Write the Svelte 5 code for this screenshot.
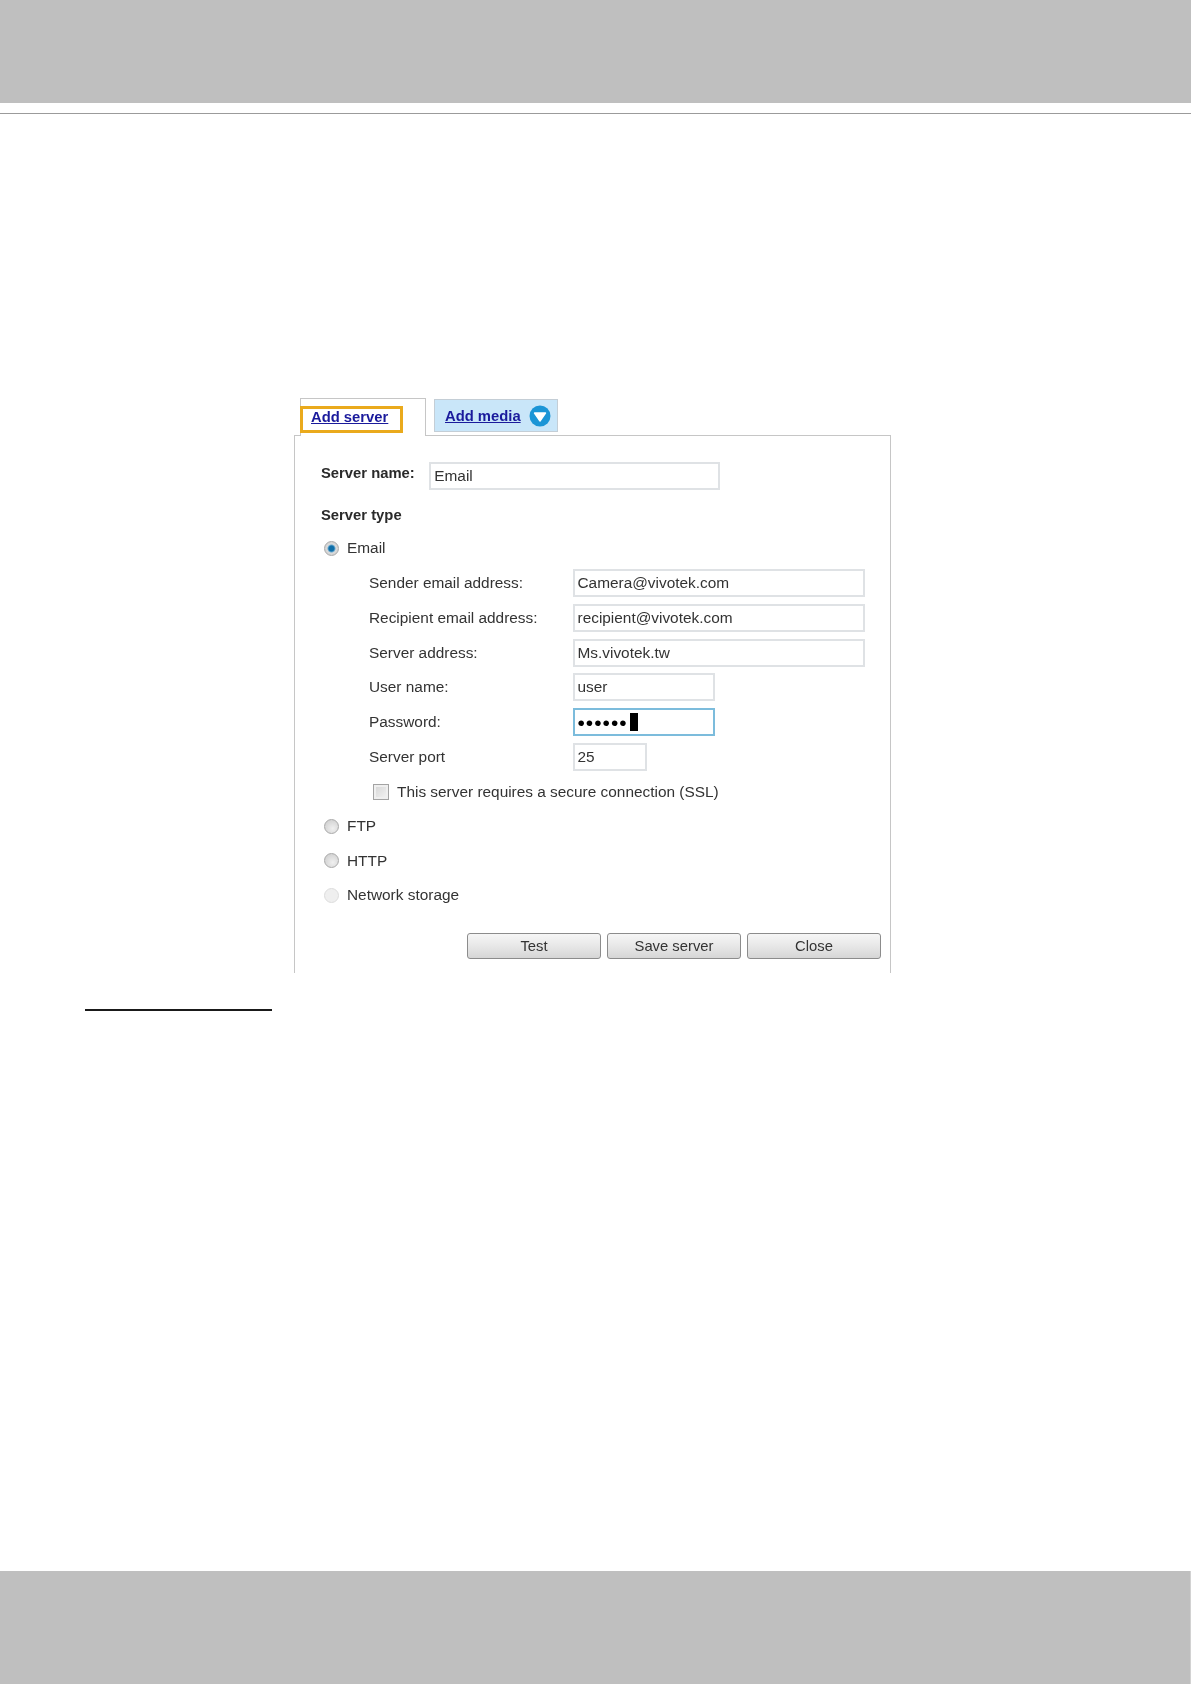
<script>
  const fields = [
    { label: 'Sender email address:', value: 'Camera@vivotek.com', size: 'long' },
    { label: 'Recipient email address:', value: 'recipient@vivotek.com', size: 'long' },
    { label: 'Server address:', value: 'Ms.vivotek.tw', size: 'long' },
    { label: 'User name:', value: 'user', size: 'mid' }
  ]
</script>

<div class="page">
  <div class="top"></div>
  <div class="rule"></div>

  <div class="shot">
    <div class="tabs">
      <div class="tab active"><a href="#server" class="hl">Add server</a></div>
      <div class="tab media">
        <a href="#media">Add media</a>
        <svg width="22" height="22" viewBox="0 0 22 22">
          <circle cx="11" cy="11" r="10.5" fill="#1b95d6" />
          <path d="M5.5 8 H16.5 L11 16 Z" fill="#fff" stroke="#fff" stroke-width="1.4" stroke-linejoin="round" />
        </svg>
      </div>
    </div>

    <div class="panel">
      <div class="name-row">
        <b>Server name:</b>
        <input class="field name" readonly value="Email" />
      </div>
      <div class="type-title"><b>Server type</b></div>

      <div class="radio-row first"><span class="radio on"></span>Email</div>

      <div class="form">
        {#each fields as f}
          <div class="row">
            <span class="lbl">{f.label}</span>
            <input class="field {f.size}" readonly value={f.value} />
          </div>
        {/each}
        <div class="row">
          <span class="lbl">Password:</span>
          <div class="field mid focus"><span class="dots">••••••</span><span class="caret"></span></div>
        </div>
        <div class="row">
          <span class="lbl">Server port</span>
          <input class="field port" readonly value="25" />
        </div>
        <div class="check-row"><span class="check"></span>This server requires a secure connection (SSL)</div>
      </div>

      <div class="radio-row"><span class="radio"></span>FTP</div>
      <div class="radio-row"><span class="radio"></span>HTTP</div>
      <div class="radio-row"><span class="radio off"></span>Network storage</div>

      <div class="buttons">
        <button>Test</button>
        <button>Save server</button>
        <button>Close</button>
      </div>
    </div>
  </div>

  <div class="footnote"></div>
  <div class="bottom"></div>
</div>

<style>
  :global(body) {
    margin: 0;
    background: #fff;
  }

  .page {
    display: flex;
    flex-direction: column;
    height: 1684px;
    font-family: "Liberation Sans", Arial, sans-serif;
    font-size: 15.4px;
    color: #333;
  }

  .top {
    height: 103px;
    background: #bfbfbf;
  }

  .rule {
    height: 1px;
    margin-top: 10px;
    background: #9b9b9b;
  }

  .shot {
    width: 597px;
    margin: 284px 0 0 294px;
    filter: blur(0.35px);
  }

  .tabs {
    display: flex;
    align-items: flex-start;
    height: 37px;
    padding-left: 6px;
    position: relative;
    z-index: 1;
  }

  .tab {
    box-sizing: border-box;
    font-size: 14.8px;
    font-weight: bold;
  }

  .tab a {
    color: #1a1a9c;
  }

  .active {
    width: 126px;
    height: 38px;
    padding-top: 7px;
    background: #fff;
    border: solid #c6c6c6;
    border-width: 1px 1px 0 1px;
  }

  .hl {
    display: block;
    box-sizing: border-box;
    width: 103px;
    height: 27px;
    margin-left: -1px;
    padding: 0 0 0 8px;
    border: 3px solid #eaaa1c;
  }

  .media {
    display: flex;
    align-items: center;
    gap: 8px;
    width: 124px;
    height: 33px;
    margin: 1px 0 0 8px;
    padding-left: 10px;
    background: #c9e6f9;
    border: 1px solid #c4ced6;
  }

  .panel {
    box-sizing: border-box;
    height: 538px;
    padding: 25.5px 0 0 26px;
    border: solid #c6c6c6;
    border-width: 1px 1px 0 1px;
  }

  .name-row {
    display: flex;
    align-items: flex-start;
    gap: 14.5px;
    color: #2a2a2a;
    line-height: 22px;
  }

  .name-row b,
  .type-title b {
    font-size: 14.8px;
  }

  .field {
    box-sizing: border-box;
    height: 28px;
    margin: 0;
    padding: 0 3px;
    border: 2px solid #dfe2e5;
    background: #fff;
    font: inherit;
    color: #333;
    outline: none;
  }

  .name {
    width: 291px;
  }

  .type-title {
    margin-top: 13.5px;
    line-height: 24px;
    color: #2a2a2a;
  }

  .radio-row {
    display: flex;
    align-items: center;
    gap: 8px;
    height: 20px;
    margin: 14.6px 0 0 3px;
  }

  .radio-row.first {
    margin-top: 11.2px;
  }

  .radio {
    box-sizing: border-box;
    width: 15px;
    height: 15px;
    border-radius: 50%;
    border: 1px solid #a9a9a9;
    background: radial-gradient(circle at 60% 65%, #f0f0f0, #c9c9c9);
  }

  .radio.on {
    background: radial-gradient(circle, #0f6ea8 0 2.6px, #5fa3cb 3.4px, #dcdcdc 4.5px, #c4c4c4);
  }

  .radio.off {
    border-color: #dcdcdc;
    background: #efefef;
  }

  .form {
    display: flex;
    flex-direction: column;
    gap: 6.7px;
    margin: 11.1px 0 0 48px;
  }

  .row {
    display: flex;
    align-items: center;
    height: 28px;
  }

  .lbl {
    width: 203.5px;
  }

  .long {
    width: 292px;
  }

  .mid {
    width: 142px;
  }

  .port {
    width: 74px;
  }

  .focus {
    display: flex;
    align-items: center;
    border-color: #7cbcdc;
  }

  .dots {
    color: #000;
    font-size: 21px;
    letter-spacing: 1px;
    line-height: 1;
  }

  .caret {
    width: 8px;
    height: 18px;
    margin-left: 2px;
    background: #000;
  }

  .check-row {
    display: flex;
    align-items: center;
    gap: 8px;
    height: 20px;
    margin: 4.3px 0 0 4px;
  }

  .check {
    box-sizing: border-box;
    width: 16px;
    height: 16px;
    border: 1px solid #a3a3a3;
    background: linear-gradient(135deg, #d4d4d4, #f4f4f4);
    box-shadow: inset 0 0 0 2px #efefef;
  }

  .buttons {
    display: flex;
    gap: 6px;
    margin: 28px 0 0 146px;
  }

  button {
    box-sizing: border-box;
    width: 134px;
    height: 26px;
    padding: 0;
    border: 1px solid #8c8c8c;
    border-radius: 3px;
    background: linear-gradient(#f6f6f6, #e9e9e9 45%, #d6d6d6);
    font: inherit;
    font-size: 14.8px;
    color: #333;
  }

  .footnote {
    width: 187px;
    height: 2px;
    margin: 36px 0 0 85px;
    background: #1a1a1a;
  }

  .bottom {
    margin-top: auto;
    height: 113px;
    background: #bfbfbf;
    border-right: 1px solid #d2d2d2;
  }
</style>
